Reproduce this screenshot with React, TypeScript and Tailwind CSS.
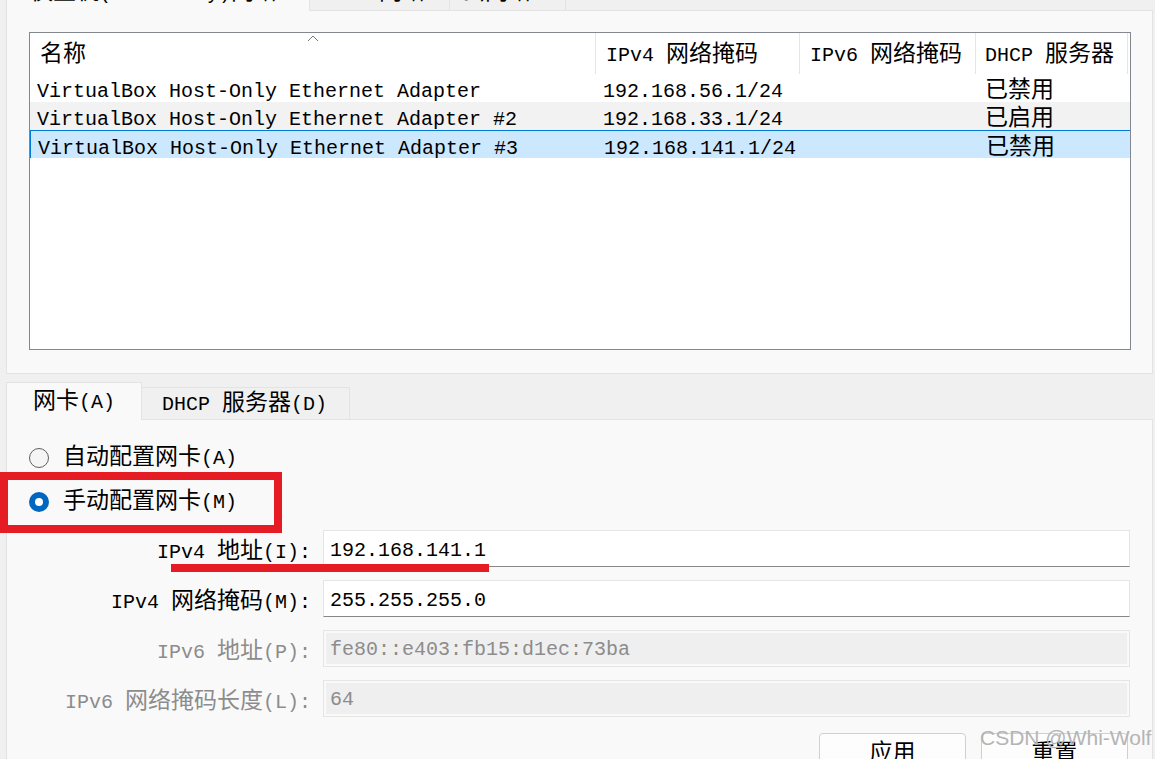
import React from "react";

// 中日韩字符单独放大，拉丁字符用等宽字体
const CJK = /([\u2e80-\u9fff\u3000-\u303f\uff00-\uffef]+)/;

function T({ s }: { s: string }) {
  return (
    <span>
      {s.split(CJK).map((p, i) =>
        i % 2 === 1 ? (
          <span key={i} className="text-[23px]">
            {p}
          </span>
        ) : (
          <React.Fragment key={i}>{p}</React.Fragment>
        )
      )}
    </span>
  );
}

const rows = [
  { name: "VirtualBox Host-Only Ethernet Adapter", ip: "192.168.56.1/24", dhcp: "已禁用" },
  { name: "VirtualBox Host-Only Ethernet Adapter #2", ip: "192.168.33.1/24", dhcp: "已启用" },
  { name: "VirtualBox Host-Only Ethernet Adapter #3", ip: "192.168.141.1/24", dhcp: "已禁用" },
];

const fields = [
  { label: "IPv4 地址(I):", value: "192.168.141.1", disabled: false },
  { label: "IPv4 网络掩码(M):", value: "255.255.255.0", disabled: false },
  { label: "IPv6 地址(P):", value: "fe80::e403:fb15:d1ec:73ba", disabled: true },
  { label: "IPv6 网络掩码长度(L):", value: "64", disabled: true },
];

const cols = "grid grid-cols-[566px_204px_176px_152px_1fr]";

function Radio({ checked }: { checked?: boolean }) {
  if (checked) {
    return (
      <span className="w-[20px] h-[20px] rounded-full bg-[#0067c0] flex items-center justify-center shrink-0">
        <span className="w-[8px] h-[8px] rounded-full bg-white" />
      </span>
    );
  }
  return <span className="w-[20px] h-[20px] rounded-full border border-[#5f5f5f] bg-[#f5f5f5] shrink-0" />;
}

export default function App() {
  return (
    <div className="relative w-[1155px] h-[759px] overflow-hidden bg-[#f0f0f0] text-black text-[20px] leading-[28px] font-['Liberation_Mono','Noto_Sans_CJK_SC',monospace]">
      <div className="pl-[6px] pr-[2px]">
        {/* 顶部标签页（被截断） */}
        <div className="flex h-[11px]">
          <div className="w-[304px] bg-[#f9f9f9] border-x border-[#e3e3e3] overflow-hidden pl-[23px]">
            <div className="mt-[-21px] whitespace-nowrap">
              <T s="仅主机(Host-Only)网络" />
            </div>
          </div>
          <div className="w-[140px] border-r border-b border-[#e3e3e3] overflow-hidden pl-[21px]">
            <div className="mt-[-21px] whitespace-nowrap">
              <T s="NAT 网络" />
            </div>
          </div>
          <div className="w-[116px] border-r border-b border-[#e3e3e3] overflow-hidden pl-[12px]">
            <div className="mt-[-21px] whitespace-nowrap">
              <T s="云网络" />
            </div>
          </div>
          <div className="flex-1 border-b border-[#e3e3e3]" />
        </div>

        {/* 网卡列表 */}
        <div className="h-[363px] bg-[#f9f9f9] border-x border-b border-[#e3e3e3] pt-[21px] pl-[22px] pr-[21px]">
          <div className="h-[318px] bg-white border border-[#828790]">
            <div className={`${cols} h-[41px]`}>
              <div className="relative border-r border-[#e5e5e5] pl-[10px] pt-[3px] flex items-center">
                <T s="名称" />
                <svg className="absolute left-[277px] top-[1px]" width="12" height="8" viewBox="0 0 12 8">
                  <polyline points="1,7 6,2 11,7" fill="none" stroke="#7a7a7a" strokeWidth="1" />
                </svg>
              </div>
              <div className="border-r border-[#e5e5e5] pl-[10px] pt-[3px] flex items-center whitespace-nowrap">
                <T s="IPv4 网络掩码" />
              </div>
              <div className="border-r border-[#e5e5e5] pl-[10px] pt-[3px] flex items-center whitespace-nowrap">
                <T s="IPv6 网络掩码" />
              </div>
              <div className="border-r border-[#e5e5e5] pl-[9px] pt-[3px] flex items-center whitespace-nowrap">
                <T s="DHCP 服务器" />
              </div>
              <div />
            </div>
            {rows.map((r, i) => (
              <div
                key={i}
                className={`${cols} h-[28px] pt-[3px] items-center whitespace-nowrap ${
                  i === 1 ? "bg-[#f2f2f2]" : ""
                } ${i === 2 ? "bg-[#cce8ff] border-t border-l border-[#0078d7]" : ""}`}
              >
                <div className="pl-[7px]">{r.name}</div>
                <div className="pl-[7px]">{r.ip}</div>
                <div />
                <div className="pl-[9px]">
                  <T s={r.dhcp} />
                </div>
                <div />
              </div>
            ))}
          </div>
        </div>

        {/* 下方标签页 */}
        <div className="flex items-end h-[46px]">
          <div className="h-[38px] w-[136px] bg-[#f9f9f9] border-t border-x border-[#e3e3e3] pl-[26px] pt-[5px] whitespace-nowrap">
            <T s="网卡(A)" />
          </div>
          <div className="h-[33px] w-[208px] border-t border-r border-b border-[#e3e3e3] pl-[20px] pt-[2px] whitespace-nowrap">
            <T s="DHCP 服务器(D)" />
          </div>
          <div className="flex-1 border-b border-[#e3e3e3]" />
        </div>

        {/* 网卡设置 */}
        <div className="h-[400px] bg-[#f9f9f9] border-x border-[#e3e3e3] pt-[24px] pr-[22px]">
          <div className="flex items-center h-[28px] pl-[22px] gap-[14px]">
            <Radio />
            <span className="whitespace-nowrap">
              <T s="自动配置网卡(A)" />
            </span>
          </div>
          <div className="flex items-center h-[28px] pl-[22px] gap-[14px] mt-[16px]">
            <Radio checked />
            <span className="whitespace-nowrap">
              <T s="手动配置网卡(M)" />
            </span>
          </div>

          <div className="flex flex-col gap-[13px] mt-[14px]">
            {fields.map((f, i) => (
              <div key={i} className="grid grid-cols-[316px_1fr] items-center">
                <div
                  className={`text-right pr-[12px] whitespace-nowrap pt-[7px] ${
                    f.disabled ? "text-[#8c8c8c]" : ""
                  }`}
                >
                  <T s={f.label} />
                </div>
                {f.disabled ? (
                  <div className="h-[37px] border border-[#e5e5e5] p-[2px]">
                    <div className="h-full bg-[#efefef] pl-[4px] pt-[3px] text-[#8c8c8c]">{f.value}</div>
                  </div>
                ) : (
                  <div className="h-[37px] bg-white border border-[#e5e5e5] border-b-[#878787] pl-[6px] pt-[6px]">
                    {f.value}
                  </div>
                )}
              </div>
            ))}
          </div>

          <div className="flex justify-end gap-[15px] mt-[16px] pr-[2px]">
            <div className="w-[147px] h-[42px] bg-[#fdfdfd] border border-[#d0d0d0] rounded-[4px] flex items-center justify-center">
              <T s="应用" />
            </div>
            <div className="w-[147px] h-[42px] bg-[#fdfdfd] border border-[#d0d0d0] rounded-[4px] flex items-center justify-center">
              <T s="重置" />
            </div>
          </div>
        </div>
      </div>

      {/* 标注 */}
      <div className="absolute left-0 top-[472px] w-[282px] h-[61px] border-[8px] border-[#e51c23]" />
      <div className="absolute left-[171px] top-[564px] w-[318px] h-[8px] bg-[#e51c23]" />

      {/* 水印 */}
      <div className="absolute left-[980px] top-[724px] text-[21px] leading-[28px] text-[#b4b4b4] font-['Liberation_Sans',sans-serif] whitespace-nowrap">
        CSDN @Whi-Wolf
      </div>
    </div>
  );
}
